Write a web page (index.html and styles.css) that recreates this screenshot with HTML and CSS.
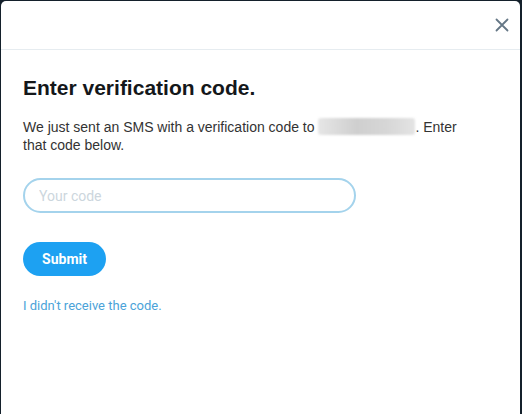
FILE: index.html
```html
<!DOCTYPE html>
<html lang="en">
<head>
    <meta charset="UTF-8">
    <title>Enter verification code</title>
    <link rel="stylesheet" href="styles.css">
</head>
<body>
    <div class="modal">
        <div class="modal-header">
            <button class="close-btn" aria-label="Close">
                <svg width="14" height="14" viewBox="0 0 14 14">
                    <path d="M1.5 1.5 L12.5 12.5 M12.5 1.5 L1.5 12.5" stroke="#657786" stroke-width="1.8" stroke-linecap="round"/>
                </svg>
            </button>
        </div>

        <div class="modal-body">
            <h1>Enter verification code.</h1>
            <p class="intro">We just sent an SMS with a verification code to <span class="blurred"></span>. Enter that code below.</p>

            <form class="code-form">
                <input type="text" class="code-input" placeholder="Your code">
                <button type="submit" class="submit-btn">Submit</button>
            </form>

            <a href="#" class="resend-link">I didn't receive the code.</a>
        </div>
    </div>
</body>
</html>
```

FILE: styles.css
```css
/* Page */
body {
    margin: 0;
    background-color: #14202b; /* dark overlay */
    font-family: 'Liberation Sans', Arial, sans-serif;
    height: 414px;
    overflow: hidden;
}

.modal {
    margin: 1px 2px 0 1px;
    background-color: #fff;
    border-radius: 5px 5px 0 0;
    height: 420px;
}

.modal-header {
    height: 48px;
    border-bottom: 1px solid #e6ecf0;
    display: flex;
    align-items: center;
    justify-content: flex-end;
    padding-right: 11px;
}

.close-btn {
    background: none;
    border: none;
    padding: 0;
    width: 14px;
    height: 14px;
    cursor: pointer;
}

.close-btn svg {
    display: block;
}

/* Body */
.modal-body {
    padding: 0 40px 0 22px;
}

.modal-body h1 {
    margin: 26px 0 0;
    font-size: 21px;
    line-height: 24px;
    font-weight: bold;
    color: #14171a;
}

.intro {
    margin: 18px 0 0;
    font-size: 14px;
    line-height: 18px;
    color: #333;
}

.blurred {
    display: inline-block;
    width: 97px;
    height: 17px;
    vertical-align: -3px;
    background: linear-gradient(90deg, #e6e6e6, #cfcfcf 40%, #d6d6d6 70%, #e4e4e4);
    border-radius: 3px;
    filter: blur(1px);
}

/* Form */
.code-form {
    display: flex;
    flex-direction: column;
    align-items: flex-start;
}

.code-input {
    margin-top: 24px;
    width: 333px;
    height: 35px;
    box-sizing: border-box;
    border: 2px solid #a4d3ec;
    border-radius: 18px;
    padding: 0 14px;
    font-family: Roboto, sans-serif;
    font-size: 14px;
    color: #14171a;
    outline: none;
    caret-color: #000;
}

.code-input::placeholder {
    color: #ccd6dd;
}

.submit-btn {
    margin-top: 29px;
    width: 83px;
    height: 34px;
    background-color: #1da1f2;
    color: #fff;
    border: none;
    border-radius: 17px;
    font-family: Roboto, sans-serif;
    font-size: 14px;
    font-weight: bold;
    cursor: pointer;
}

.resend-link {
    display: inline-block;
    margin-top: 22px;
    font-family: Roboto, sans-serif;
    font-size: 13px;
    color: #4ba3d9;
    text-decoration: none;
}
```
